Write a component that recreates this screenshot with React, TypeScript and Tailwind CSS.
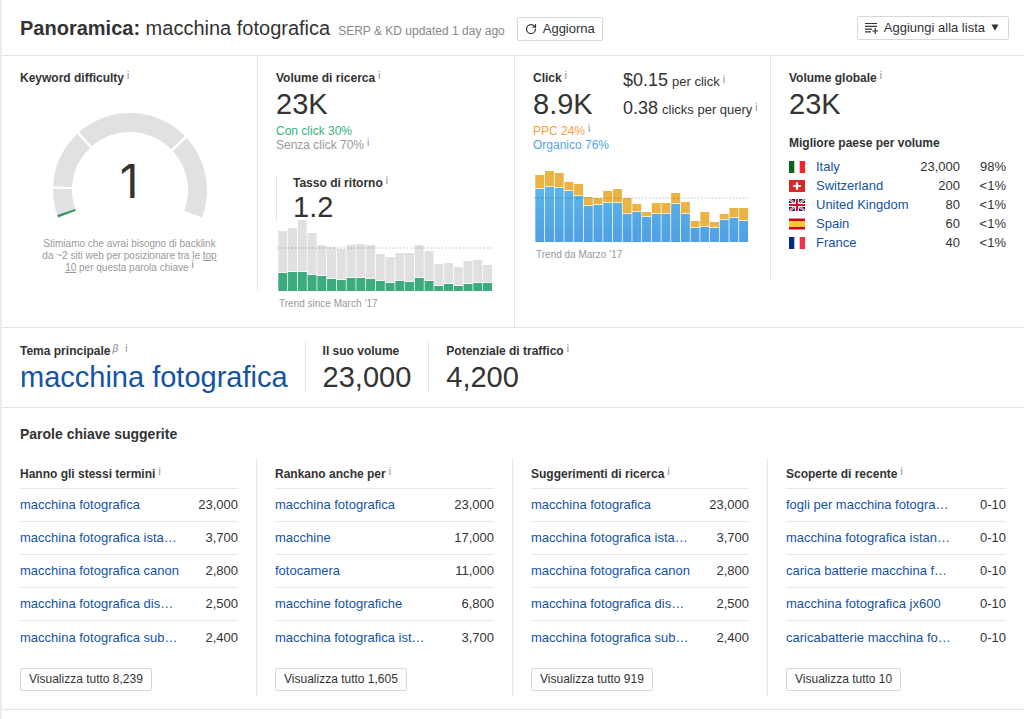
import { ReactNode } from 'react'
import { RotateCw } from 'lucide-react'

type Bar = [total: number, part: number]

const volumeTrend: Bar[] = [
  [60, 18], [63, 19], [71, 19], [58, 16], [46, 15], [44, 12], [42, 11], [46, 13],
  [47, 13], [46, 12], [37, 10], [34, 8], [38, 10], [38, 9], [46, 13], [40, 10],
  [27, 5], [28, 7], [24, 5], [30, 7], [31, 8], [26, 8],
]

const clickTrend: Bar[] = [
  [67, 53], [71, 55], [69, 54], [60, 51], [58, 46], [45, 36], [44, 37], [51, 39],
  [53, 39], [44, 28], [38, 30], [30, 25], [39, 28], [39, 28], [49, 38], [40, 28],
  [21, 14], [30, 15], [20, 14], [28, 22], [34, 24], [34, 21],
]

const countries = [
  { code: 'it', name: 'Italy', volume: '23,000', share: '98%' },
  { code: 'ch', name: 'Switzerland', volume: '200', share: '<1%' },
  { code: 'gb', name: 'United Kingdom', volume: '80', share: '<1%' },
  { code: 'es', name: 'Spain', volume: '60', share: '<1%' },
  { code: 'fr', name: 'France', volume: '40', share: '<1%' },
]

const ideas = [
  {
    title: 'Hanno gli stessi termini',
    total: '8,239',
    rows: [
      ['macchina fotografica', '23,000'],
      ['macchina fotografica ista…', '3,700'],
      ['macchina fotografica canon', '2,800'],
      ['macchina fotografica dis…', '2,500'],
      ['macchina fotografica sub…', '2,400'],
    ],
  },
  {
    title: 'Rankano anche per',
    total: '1,605',
    rows: [
      ['macchina fotografica', '23,000'],
      ['macchine', '17,000'],
      ['fotocamera', '11,000'],
      ['macchine fotografiche', '6,800'],
      ['macchina fotografica ist…', '3,700'],
    ],
  },
  {
    title: 'Suggerimenti di ricerca',
    total: '919',
    rows: [
      ['macchina fotografica', '23,000'],
      ['macchina fotografica ista…', '3,700'],
      ['macchina fotografica canon', '2,800'],
      ['macchina fotografica dis…', '2,500'],
      ['macchina fotografica sub…', '2,400'],
    ],
  },
  {
    title: 'Scoperte di recente',
    total: '10',
    rows: [
      ['fogli per macchina fotogra…', '0-10'],
      ['macchina fotografica istan…', '0-10'],
      ['carica batterie macchina f…', '0-10'],
      ['macchina fotografica jx600', '0-10'],
      ['caricabatterie macchina fo…', '0-10'],
    ],
  },
]

function Info() {
  return <sup className="-top-[3px] ml-[3px] text-[10px] font-normal text-[#888]">i</sup>
}

function Heading({ children }: { children: ReactNode }) {
  return <h3 className="text-xs leading-4 font-bold whitespace-nowrap">{children}</h3>
}

function BigNumber({ children }: { children: ReactNode }) {
  return <p className="text-[29px] leading-8">{children}</p>
}

// angle is measured clockwise from the start of the scale
function point(radius: number, angle: number) {
  const rad = ((159 + angle) * Math.PI) / 180
  return `${78 + radius * Math.cos(rad)} ${80 + radius * Math.sin(rad)}`
}

function arc(from: number, to: number) {
  return `M${point(77, from)}A77 77 0 0 1 ${point(77, to)}L${point(58, to)}A58 58 0 0 0 ${point(58, from)}Z`
}

function Gauge() {
  return (
    <svg viewBox="0 0 156 110" className="mx-auto mt-6 h-[110px] w-[156px]">
      <g fill="#e1e1e3">
        <path d={arc(1.5, 22)} />
        <path d={arc(23.8, 67.7)} />
        <path d={arc(69.8, 156.5)} />
        <path d={arc(158.6, 222)} />
      </g>
      <path d={arc(0, 2)} fill="#37985f" />
      <text x="77" y="88" textAnchor="middle" fontSize="46" fill="#333" className="font-[Inter,sans-serif]">
        1
      </text>
    </svg>
  )
}

function TrendChart({ data, top, bottom, average }: { data: Bar[]; top: string; bottom: string; average: number }) {
  const step = 9.75
  return (
    <svg viewBox="0 0 220 71" preserveAspectRatio="none" className="block h-[71px] w-full">
      <defs>
        <linearGradient id="organic" gradientUnits="userSpaceOnUse" x1="0" y1="16" x2="0" y2="71">
          <stop offset="0" stopColor="#5cb5e8" />
          <stop offset="1" stopColor="#509fe2" />
        </linearGradient>
      </defs>
      {data.map(([total, part], i) => (
        <g key={i}>
          <rect x={2.3 + i * step} y={71 - total} width={9} height={total - part - 0.7} fill={top} />
          <rect x={2.3 + i * step} y={71 - part} width={9} height={part} fill={bottom} />
        </g>
      ))}
      <line x1="1" x2="218" y1={71 - average} y2={71 - average} stroke="#000" strokeOpacity="0.25" strokeDasharray="1.5 2" />
    </svg>
  )
}

function Flag({ code }: { code: string }) {
  return (
    <svg viewBox="0 0 16 12" className="block h-3 w-4">
      {code === 'it' && (
        <>
          <path fill="#fff" d="M0 0h16v12H0z" />
          <path fill="#0b6318" d="M0 0h5.3v12H0z" />
          <path fill="#f5222d" d="M10.7 0H16v12h-5.3z" />
        </>
      )}
      {code === 'fr' && (
        <>
          <path fill="#fff" d="M0 0h16v12H0z" />
          <path fill="#052b80" d="M0 0h5.3v12H0z" />
          <path fill="#f32f45" d="M10.7 0H16v12h-5.3z" />
        </>
      )}
      {code === 'ch' && (
        <>
          <path fill="#d52b27" d="M0 0h16v12H0z" />
          <path fill="#fff" d="M6.9 2.2h2.2v2.7h2.7v2.2H9.1v2.7H6.9V7.1H4.2V4.9h2.7z" />
        </>
      )}
      {code === 'es' && (
        <>
          <path fill="#c60b1e" d="M0 .5h16v11H0z" />
          <path fill="#ffc52e" d="M0 3h16v6H0z" />
        </>
      )}
      {code === 'gb' && (
        <>
          <path fill="#16246e" d="M0 0h16v12H0z" />
          <path stroke="#fff" strokeWidth="2.2" d="M0 0l16 12M16 0L0 12" />
          <path stroke="#d0142c" strokeWidth="0.9" d="M0 0l16 12M16 0L0 12" />
          <path stroke="#fff" strokeWidth="4" d="M8 0v12M0 6h16" />
          <path stroke="#d0142c" strokeWidth="2.2" d="M8 0v12M0 6h16" />
        </>
      )}
    </svg>
  )
}

function Header() {
  return (
    <header className="flex h-14 items-center justify-between border-b border-[#e4e4e4] pr-[15px] pl-[18px]">
      <div className="flex items-baseline">
        <h1 className="text-xl whitespace-nowrap">
          <b>Panoramica:</b> macchina fotografica
        </h1>
        <span className="ml-2 text-xs whitespace-nowrap text-[#888]">SERP &amp; KD updated 1 day ago</span>
        <button className="ml-3 flex h-6 items-center gap-[6px] rounded-xs border border-[#d8d8d8] px-[7px] text-[13px]">
          <RotateCw size={12} strokeWidth={2.5} />
          Aggiorna
        </button>
      </div>
      <button className="flex h-6 items-center rounded-xs border border-[#d8d8d8] pr-[9px] pl-[7px] text-[13px] whitespace-nowrap">
        <svg viewBox="0 0 14 12" className="h-3 w-[14px]" fill="none" stroke="#333" strokeWidth="1.2">
          <path d="M0 1.5h12M0 4.3h12M0 7.1h7M0 9.9h6M10.2 6v6M7.2 9h6" />
        </svg>
        <span className="mr-[6px] ml-[5px]">Aggiungi alla lista</span>
        <svg viewBox="0 0 8 7" className="h-[7px] w-2" fill="#333">
          <path d="M.5 .5h7L4 6.8z" />
        </svg>
      </button>
    </header>
  )
}

function Metrics() {
  return (
    <section className="grid grid-cols-[256fr_257fr_256fr_253fr] items-start border-b border-[#e4e4e4]">
      <div className="min-w-0 border-r border-[#e4e4e4] px-[18px] pt-[14px] pb-[17px]">
        <Heading>
          Keyword difficulty
          <Info />
        </Heading>
        <Gauge />
        <p className="mx-auto mt-[18px] w-[180px] text-center text-[10px] leading-3 text-[#999]">
          Stimiamo che avrai bisogno di backlink da ~2 siti web per posizionare tra le{' '}
          <a href="#" className="underline">
            top
          </a>{' '}
          <a href="#" className="underline">
            10
          </a>{' '}
          per questa parola chiave
          <Info />
        </p>
      </div>

      <div className="min-w-0 border-r border-[#e4e4e4] px-[18px] pt-[14px] pb-[17px]">
        <Heading>
          Volume di ricerca
          <Info />
        </Heading>
        <div className="mt-[2px]">
          <BigNumber>23K</BigNumber>
        </div>
        <div className="mt-1 text-xs leading-[14px]">
          <p className="text-[#35b17c]">Con click 30%</p>
          <p className="text-[#999]">
            Senza click 70%
            <Info />
          </p>
        </div>
        <div className="mt-[23px] h-[45px] border-l border-[#e4e4e4] pl-4">
          <Heading>
            Tasso di ritorno
            <Info />
          </Heading>
          <BigNumber>1.2</BigNumber>
        </div>
        <TrendChart data={volumeTrend} top="#e0e0e2" bottom="#3cab7d" average={43} />
        <p className="mt-[7px] px-[3px] text-[10px] leading-3 text-[#999]">Trend since March ’17</p>
      </div>

      <div className="min-w-0 border-r border-[#e4e4e4] px-[18px] pt-[14px] pb-[19px]">
        <div className="flex">
          <div className="w-[90px] shrink-0">
            <Heading>
              Click
              <Info />
            </Heading>
            <div className="mt-[2px]">
              <BigNumber>8.9K</BigNumber>
            </div>
          </div>
          <div className="flex flex-col gap-[6px] text-[13px] leading-5 whitespace-nowrap">
            <p className="flex items-baseline gap-1">
              <span className="text-lg leading-5">$0.15</span>
              <span>
                per click
                <Info />
              </span>
            </p>
            <p className="flex items-baseline gap-1">
              <span className="text-lg leading-5">0.38</span>
              <span>
                clicks per query
                <Info />
              </span>
            </p>
          </div>
        </div>
        <div className="mt-1 text-xs leading-[14px]">
          <p className="text-[#f3a03f]">
            PPC 24%
            <Info />
          </p>
          <p className="text-[#54a5e6]">Organico 76%</p>
        </div>
        <div className="mt-[19px]">
          <TrendChart data={clickTrend} top="#ebb344" bottom="url(#organic)" average={44} />
        </div>
        <p className="mt-[7px] px-[3px] text-[10px] leading-3 text-[#999]">Trend da Marzo ’17</p>
      </div>

      <div className="min-w-0 px-[18px] pt-[14px]">
        <Heading>
          Volume globale
          <Info />
        </Heading>
        <div className="mt-[2px]">
          <BigNumber>23K</BigNumber>
        </div>
        <div className="mt-[15px]">
          <Heading>Migliore paese per volume</Heading>
        </div>
        <table className="mt-[6px] w-full text-[13px] leading-[19px]">
          <tbody>
            {countries.map((country) => (
              <tr key={country.code}>
                <td className="w-[27px] p-0">
                  <Flag code={country.code} />
                </td>
                <td className="p-0 whitespace-nowrap">
                  <a href="#" className="text-[#1453a4]">
                    {country.name}
                  </a>
                </td>
                <td className="p-0 text-right">{country.volume}</td>
                <td className="w-[46px] p-0 text-right">{country.share}</td>
              </tr>
            ))}
          </tbody>
        </table>
      </div>
    </section>
  )
}

function ParentTopic() {
  return (
    <section className="flex border-b border-[#e4e4e4] pt-[13px] pb-[14px] pl-[18px]">
      <div className="pt-[2px] pr-[17px]">
        <Heading>
          Tema principale
          <sup className="-top-[3px] ml-[2px] text-[10px] font-normal text-[#888] italic">β</sup>
          <span className="ml-1">
            <Info />
          </span>
        </Heading>
        <div className="mt-[2px]">
          <BigNumber>
            <a href="#" className="text-[#1453a4]">
              macchina fotografica
            </a>
          </BigNumber>
        </div>
      </div>
      <div className="border-l border-[#e4e4e4] px-[17px] pt-[2px]">
        <Heading>Il suo volume</Heading>
        <div className="mt-[2px]">
          <BigNumber>23,000</BigNumber>
        </div>
      </div>
      <div className="border-l border-[#e4e4e4] px-[17px] pt-[2px]">
        <Heading>
          Potenziale di traffico
          <Info />
        </Heading>
        <div className="mt-[2px]">
          <BigNumber>4,200</BigNumber>
        </div>
      </div>
    </section>
  )
}

function KeywordIdeas() {
  return (
    <section className="border-b border-[#e4e4e4] pt-4 pb-[13px]">
      <h2 className="px-[18px] text-sm leading-5 font-bold">Parole chiave suggerite</h2>
      <div className="mt-[14px] grid grid-cols-[255fr_256fr_255fr_256fr]">
        {ideas.map((group) => (
          <div key={group.title} className="min-w-0 border-r border-[#e4e4e4] px-[18px] pt-2 pb-[5px] last:border-r-0">
            <Heading>
              {group.title}
              <Info />
            </Heading>
            <table className="mt-[6px] w-full text-[13px]">
              <tbody>
                {group.rows.map(([keyword, volume]) => (
                  <tr key={keyword} className="h-[33px] border-t border-[#e8e8e8]">
                    <td className="p-0 whitespace-nowrap">
                      <a href="#" className="text-[#1453a4]">
                        {keyword}
                      </a>
                    </td>
                    <td className="p-0 text-right">{volume}</td>
                  </tr>
                ))}
              </tbody>
            </table>
            <button className="mt-[14px] h-[23px] rounded-xs border border-[#d8d8d8] px-2 text-xs">
              Visualizza tutto {group.total}
            </button>
          </div>
        ))}
      </div>
    </section>
  )
}

export default function App() {
  return (
    <main className="min-h-screen border-l-2 border-[#ececec] bg-white font-['Liberation_Sans',Arial,sans-serif] text-[#333]">
      <Header />
      <Metrics />
      <ParentTopic />
      <KeywordIdeas />
    </main>
  )
}
